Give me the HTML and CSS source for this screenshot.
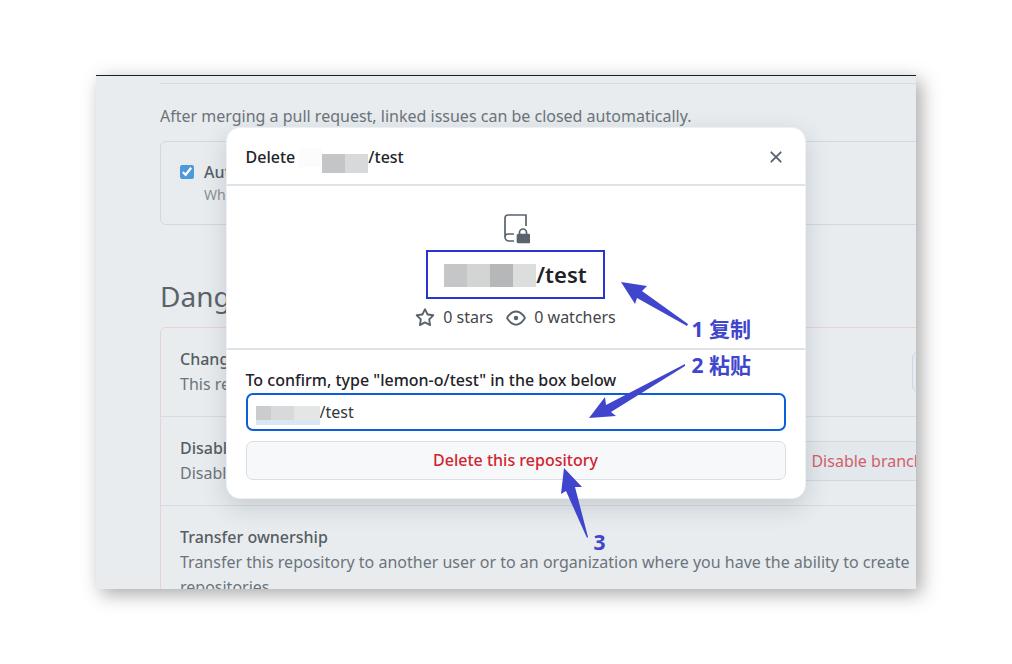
FILE: index.html
```html
<!DOCTYPE html>
<html lang="en">
<head>
    <meta charset="UTF-8">
    <meta name="viewport" content="width=device-width, initial-scale=1.0">
    <title>Delete repository</title>
    <link rel="stylesheet" href="styles.css">
</head>
<body>
    <div class="frame">
        <!-- settings page -->
        <main class="settings">
            <p class="note">After merging a pull request, linked issues can be closed automatically.</p>

            <div class="option">
                <input type="checkbox" id="autoClose" checked>
                <div>
                    <label for="autoClose">Auto-close issues</label>
                    <p class="hint">Whenever a linked pull request merges</p>
                </div>
            </div>

            <h2>Danger Zone</h2>
            <div class="danger-zone">
                <div class="danger-row">
                    <div class="danger-text">
                        <h3>Change visibility</h3>
                        <p>This repository is private.</p>
                    </div>
                    <button class="btn btn-light">Change visibility</button>
                </div>
                <div class="danger-row">
                    <div class="danger-text">
                        <h3>Disable branch protection</h3>
                        <p>Disable branch protection rules</p>
                    </div>
                    <button class="btn">Disable branch protection rules</button>
                </div>
                <div class="danger-row">
                    <div class="danger-text">
                        <h3>Transfer ownership</h3>
                        <p>Transfer this repository to another user or to an organization where you have the ability to create repositories.</p>
                    </div>
                    <button class="btn">Transfer</button>
                </div>
            </div>
        </main>

        <!-- dialog -->
        <div class="overlay">
            <div class="modal" role="dialog" aria-labelledby="modalTitle">
                <div class="modal-header">
                    <h1 id="modalTitle">Delete <span class="mosaic mosaic-title"><i></i><i></i><i></i></span>/test</h1>
                    <button class="close" aria-label="Close">
                        <svg width="20" height="20" viewBox="0 0 16 16" fill="currentColor"><path d="M3.72 3.72a.75.75 0 0 1 1.06 0L8 6.94l3.22-3.22a.75.75 0 1 1 1.06 1.06L9.06 8l3.22 3.22a.75.75 0 1 1-1.06 1.06L8 9.06l-3.22 3.22a.75.75 0 0 1-1.06-1.06L6.94 8 3.72 4.78a.75.75 0 0 1 0-1.06Z"/></svg>
                    </button>
                </div>

                <div class="modal-repo">
                    <svg class="repo-icon" width="28" height="30" viewBox="0 0 28 30" fill="none" stroke="currentColor" stroke-width="1.7">
                        <path d="M24 12V1H6a3 3 0 0 0-3 3v19a4 4 0 0 0 4 4h5M3 23a3 3 0 0 1 3-3h6"/>
                        <path d="M17.500 20v-1.500a3.500 3.500 0 0 1 7 0V20"/>
                        <rect x="15.500" y="20.500" width="12" height="8" rx="1" fill="currentColor"/>
                    </svg>
                    <div class="repo-name"><span class="mosaic mosaic-name"><i></i><i></i><i></i><i></i></span>/test</div>
                    <div class="stats">
                        <svg width="20" height="20" viewBox="0 0 16 16" fill="currentColor"><path d="M8 .25a.75.75 0 0 1 .673.418l1.882 3.815 4.21.612a.75.75 0 0 1 .416 1.279l-3.046 2.97.719 4.192a.751.751 0 0 1-1.088.791L8 12.347l-3.766 1.98a.75.75 0 0 1-1.088-.79l.72-4.194L.818 6.374a.75.75 0 0 1 .416-1.28l4.21-.611L7.327.668A.75.75 0 0 1 8 .25Zm0 2.445L6.615 5.5a.75.75 0 0 1-.564.41l-3.097.45 2.24 2.184a.75.75 0 0 1 .216.664l-.528 3.084 2.769-1.456a.75.75 0 0 1 .698 0l2.77 1.456-.53-3.084a.75.75 0 0 1 .216-.664l2.24-2.183-3.096-.45a.75.75 0 0 1-.564-.41L8 2.694Z"/></svg>
                        <span>0 stars</span>
                        <svg class="eye" width="20" height="20" viewBox="0 0 16 16" fill="currentColor"><path d="M8 2c1.981 0 3.671.992 4.933 2.078 1.27 1.091 2.187 2.345 2.637 3.023a1.62 1.62 0 0 1 0 1.798c-.45.678-1.367 1.932-2.637 3.023C11.67 13.008 9.981 14 8 14s-3.671-.992-4.933-2.078C1.797 10.83.88 9.576.43 8.898a1.62 1.62 0 0 1 0-1.798c.45-.677 1.367-1.931 2.637-3.022C4.33 2.992 6.019 2 8 2ZM1.679 7.932a.12.12 0 0 0 0 .136c.411.622 1.241 1.75 2.366 2.717C5.176 11.758 6.527 12.5 8 12.5s2.825-.742 3.955-1.715c1.124-.967 1.954-2.096 2.366-2.717a.12.12 0 0 0 0-.136c-.412-.621-1.242-1.75-2.366-2.717C10.824 4.242 9.473 3.5 8 3.5s-2.824.742-3.955 1.715c-1.124.967-1.954 2.096-2.366 2.717Z"/><circle cx="8" cy="8" r="1.8"/></svg>
                        <span>0 watchers</span>
                    </div>
                </div>

                <form class="modal-form">
                    <label for="confirmName">To confirm, type "lemon-o/test" in the box below</label>
                    <div class="field">
                        <input type="text" id="confirmName" value="/test">
                        <span class="mosaic mosaic-field"><i></i><i></i><i></i></span>
                    </div>
                    <button type="button" class="delete">Delete this repository</button>
                </form>

                <!-- step arrows -->
                <svg class="arrows" width="580" height="420" viewBox="0 0 580 420" fill="#4046cc">
                    <path d="M395 155L421 159L416 164L462 197L461 199L411 171L409 177Z"/>
                    <path d="M363 291L379 270L380 278L459 237L459 239L385 285L390 289Z"/>
                    <path d="M338 341L356 360L349 360L362 410L361 411L340 364L335 367Z"/>
                </svg>
                <span class="step step-1">1 复制</span>
                <span class="step step-2">2 粘贴</span>
                <span class="step step-3">3</span>
            </div>
        </div>
    </div>
</body>
</html>
```
FILE: styles.css
```css
:root {
    --text: #1f2328;
    --muted: #59636e;
    --line: #dee3e8;
    --mark: #4046cc;
}

* {
    margin: 0;
    padding: 0;
    box-sizing: border-box;
}

body {
    padding: 75px 96px;
    overflow: hidden;
    background: #fff;
    color: var(--text);
    font: 16px/25px "Noto Sans", "Noto Sans CJK SC", sans-serif;
}

button,
input {
    font: inherit;
}

.frame {
    position: relative;
    height: calc(100vh - 150px);
    overflow: hidden;
    border-top: 1px solid #1b1f27;
    background: #e8ecef;
    box-shadow: 5px 5px 18px rgba(0, 0, 0, 0.35);
}

/* settings page */
.settings {
    margin: 7px -172px 0 64px;
    padding-top: 20px;
    border-top: 1px solid #d5dce2;
    color: #6c747b;
}

.option {
    display: flex;
    gap: 10px;
    height: 84px;
    margin-top: 12px;
    padding: 18px 19px;
    border: 1px solid #d0d9e1;
    border-radius: 6px;
}

.option input {
    width: 14px;
    height: 14px;
    margin-top: 5px;
    accent-color: #4c9adb;
}

.option label,
.settings h3 {
    color: #565d64;
    font-size: 16px;
    font-weight: 500;
}

.hint {
    color: #8a9198;
    font-size: 14px;
    line-height: 20px;
}

.settings h2 {
    margin: 53px 0 13px;
    color: #5b6268;
    font-size: 28px;
    font-weight: 400;
    line-height: 36px;
}

.danger-zone {
    border: 1px solid #ebd0d4;
    border-radius: 6px;
}

.danger-row {
    display: flex;
    align-items: center;
    gap: 20px;
    padding: 19px;
}

.danger-row + .danger-row {
    border-top: 1px solid #d5dce2;
}

.danger-text {
    flex: 1;
    max-width: 740px;
}

.btn {
    height: 40px;
    margin-left: auto;
    padding: 0 20px;
    border: 1px solid #d0d7de;
    border-radius: 6px;
    background: #e3e8ec;
    color: #d0606b;
    white-space: nowrap;
}

.btn-light {
    padding: 0 16px;
    background: #e6eaee;
}

/* dialog */
.overlay {
    position: absolute;
    inset: 0;
    display: flex;
    justify-content: center;
    align-items: flex-start;
    padding: 51px 0 0 19px;
}

.modal {
    position: relative;
    width: 580px;
    border: 1px solid #edf1f4;
    border-radius: 14px;
    background: #fff;
    box-shadow: 0 8px 24px rgba(66, 74, 83, 0.2);
}

.modal-header {
    display: flex;
    justify-content: space-between;
    align-items: center;
    height: 58px;
    padding: 2px 19px 0;
    border-bottom: 2px solid var(--line);
}

.modal-header h1 {
    display: flex;
    align-items: center;
    font-size: 16px;
    font-weight: 500;
    white-space: pre;
}

.close {
    width: 20px;
    height: 20px;
    border: none;
    background: none;
    color: var(--muted);
}

.close svg {
    display: block;
}

.modal-repo {
    display: flex;
    flex-direction: column;
    align-items: center;
    padding: 28px 19px 18px;
    border-bottom: 2px solid var(--line);
}

.repo-icon {
    color: var(--muted);
}

.repo-name {
    display: flex;
    align-items: center;
    height: 49px;
    margin: 6px 0;
    padding: 0 16px;
    border: 2px solid #2b35cd;
    font-size: 22px;
    font-weight: 600;
}

.stats {
    display: flex;
    align-items: center;
    gap: 8px;
    color: #42474d;
}

.stats svg {
    color: var(--muted);
}

.stats .eye {
    margin-left: 5px;
}

.modal-form {
    padding: 18px 19px;
}

.modal-form label {
    display: block;
    font-size: 16px;
    font-weight: 500;
}

.field {
    position: relative;
    margin-bottom: 10px;
}

.field input {
    display: block;
    width: 100%;
    height: 38px;
    padding: 0 8px 0 72px;
    border: 2px solid #0b5fdb;
    border-radius: 7px;
    background: #fff;
    color: #32373d;
    outline: none;
}

.delete {
    display: block;
    width: 100%;
    height: 39px;
    border: 1px solid #d9dfe5;
    border-radius: 7px;
    background: #f6f8fa;
    color: #d1242f;
    font-size: 16px;
    font-weight: 500;
}

/* mosaic blocks over the account name */
.mosaic {
    display: flex;
}

.mosaic i {
    width: 23px;
    height: 19px;
    background: #d8d9da;
}

.mosaic-title {
    align-items: flex-end;
    height: 32px;
}

.mosaic-title i:nth-child(1) {
    align-self: center;
    background: #fcfcfc;
}

.mosaic-title i:nth-child(2) {
    background: #c4c5c7;
}

.mosaic-name {
    margin-top: 2px;
}

.mosaic-name i {
    height: 23px;
    background: #dcdedd;
}

.mosaic-name i:nth-child(1) {
    background: #c5c6c8;
}

.mosaic-name i:nth-child(2) {
    background: #d3d5d4;
}

.mosaic-name i:nth-child(3) {
    background: #b6b7b9;
}

.mosaic-field {
    position: absolute;
    top: 13px;
    left: 10px;
    border-bottom: 5px solid #d9e6f6;
}

.mosaic-field i {
    height: 14px;
}

.mosaic-field i:nth-child(1) {
    width: 15px;
    background: #cbcccd;
}

.mosaic-field i:nth-child(3) {
    width: 26px;
    background: #e4e6e5;
}

/* step arrows */
.arrows {
    position: absolute;
    top: -1px;
    left: -1px;
    pointer-events: none;
}

.step {
    position: absolute;
    color: var(--mark);
    font-size: 21px;
    font-weight: 700;
}

.step-1 {
    top: 189px;
    left: 465px;
}

.step-2 {
    top: 225px;
    left: 465px;
}

.step-3 {
    top: 402px;
    left: 367px;
}
```
